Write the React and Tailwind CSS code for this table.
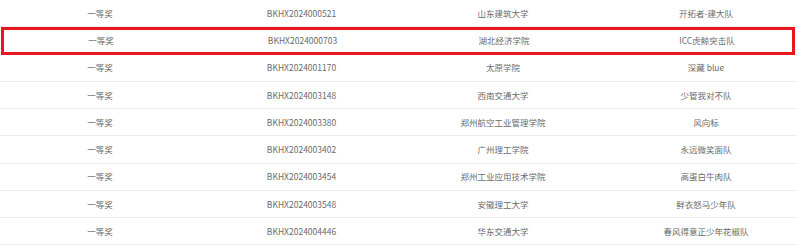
import React from 'react';

const rows = [
  ['一等奖', 'BKHX2024000521', '山东建筑大学', '开拓者-建大队'],
  ['一等奖', 'BKHX2024000703', '湖北经济学院', 'ICC虎鲸突击队'],
  ['一等奖', 'BKHX2024001170', '太原学院', '深藏 blue'],
  ['一等奖', 'BKHX2024003148', '西南交通大学', '少管我对不队'],
  ['一等奖', 'BKHX2024003380', '郑州航空工业管理学院', '风向标'],
  ['一等奖', 'BKHX2024003402', '广州理工学院', '永远微笑面队'],
  ['一等奖', 'BKHX2024003454', '郑州工业应用技术学院', '高蛋白牛肉队'],
  ['一等奖', 'BKHX2024003548', '安徽理工大学', '鲜衣怒马少年队'],
  ['一等奖', 'BKHX2024004446', '华东交通大学', '春风得意正少年花椒队'],
];

const App = () => {
  return (
    <div
      className="w-[797px] h-[247px] overflow-hidden bg-white text-[8.5px] text-[#6b6b6b]"
      style={{ fontFamily: '"Noto Sans CJK SC", "Noto Sans", sans-serif' }}
    >
      {rows.map((r, i) => (
        <div
          key={r[1]}
          className={
            'grid grid-cols-[200px_203px_200px_206px] h-[27.25px] items-center border-b border-[#ececec] ' +
            (i === 1 ? 'outline-[3px] outline-solid outline-[#e8161d] outline-offset-[-3px] mr-[2px] ml-[1px]' : '')
          }
        >
          {r.map((c, j) => (
            <div key={j} className="text-center whitespace-nowrap">
              {c}
            </div>
          ))}
        </div>
      ))}
    </div>
  );
};

export default App;
